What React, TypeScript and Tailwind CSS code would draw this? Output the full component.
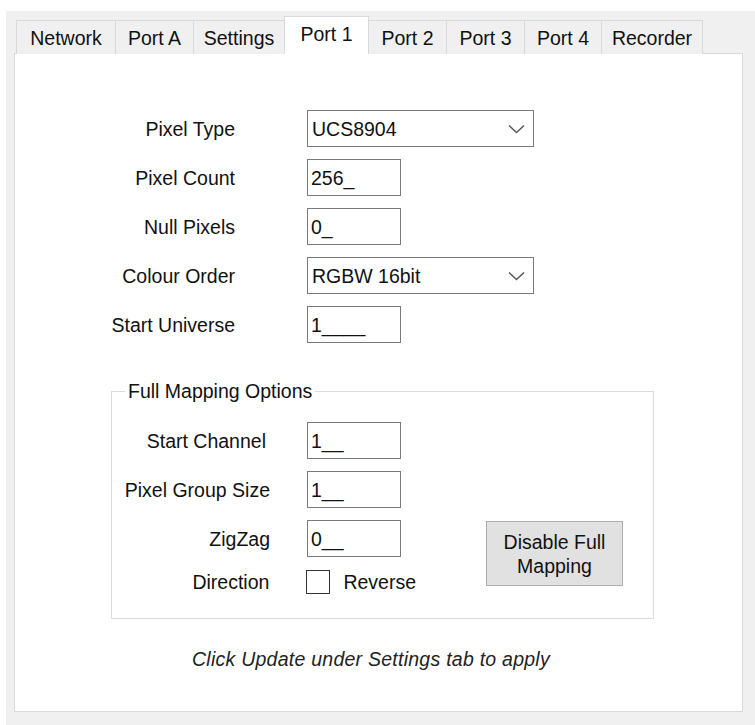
import React from "react";

const font = { fontFamily: '"Liberation Sans", Arial, sans-serif' };

function Chevron() {
  return (
    <svg width="17" height="10" viewBox="0 0 17 10" className="mr-[8px]">
      <path d="M1 1.5 L8.5 8.5 L16 1.5" fill="none" stroke="#5a5a5a" strokeWidth="1.6" />
    </svg>
  );
}

function Combo({ value }: { value: string }) {
  return (
    <div className="flex h-[37px] w-[227px] items-center justify-between border border-[#7a7a7a] bg-white pl-[4px]">
      <span>{value}</span>
      <Chevron />
    </div>
  );
}

function TextBox({ value }: { value: string }) {
  return (
    <div className="flex h-[37px] w-[94px] items-center border border-[#7a7a7a] bg-white pl-[3px]">
      <span>{value}</span>
    </div>
  );
}

const tabs: { name: string; w: string; sel?: boolean }[] = [
  { name: "Network", w: "w-[100px]" },
  { name: "Port A", w: "w-[79px]" },
  { name: "Settings", w: "w-[92px]" },
  { name: "Port 1", w: "w-[85px]", sel: true },
  { name: "Port 2", w: "w-[79px]" },
  { name: "Port 3", w: "w-[79px]" },
  { name: "Port 4", w: "w-[78px]" },
  { name: "Recorder", w: "w-[102px]" },
];

export default function App() {
  return (
    <div className="h-[725px] w-[755px] overflow-hidden bg-white pl-[6px] pt-[11px] text-[19.5px] leading-[22px] text-[#111]" style={font}>
      <div className="h-[714px] w-[749px] bg-[#f0f0f0] pl-[8px] pt-[5px]">
        <div className="relative z-10 mb-[-1px] ml-[2px] flex h-[38px] items-end">
          {tabs.map((t, i) =>
            t.sel ? (
              <div
                key={t.name}
                className={`${t.w} ${i > 0 ? "-ml-px" : ""} relative z-10 flex h-[38px] items-center justify-center border-x border-t border-[#d9d9d9] bg-white pb-[4px]`}
              >
                {t.name}
              </div>
            ) : (
              <div
                key={t.name}
                className={`${t.w} ${i > 0 ? "-ml-px" : ""} flex h-[34px] items-center justify-center border-x border-t border-[#d9d9d9] bg-[#f0f0f0]`}
              >
                {t.name}
              </div>
            )
          )}
        </div>
        <div className="h-[659px] w-[729px] border border-[#d9d9d9] bg-white pl-[96px] pt-[56px]">
          <div className="flex flex-col gap-[12px]">
            <div className="flex h-[37px] items-center gap-[72px]">
              <div className="w-[124px] text-right">Pixel Type</div>
              <Combo value="UCS8904" />
            </div>
            <div className="flex h-[37px] items-center gap-[72px]">
              <div className="w-[124px] text-right">Pixel Count</div>
              <TextBox value="256_" />
            </div>
            <div className="flex h-[37px] items-center gap-[72px]">
              <div className="w-[124px] text-right">Null Pixels</div>
              <TextBox value="0_" />
            </div>
            <div className="flex h-[37px] items-center gap-[72px]">
              <div className="w-[124px] text-right">Colour Order</div>
              <Combo value="RGBW 16bit" />
            </div>
            <div className="flex h-[37px] items-center gap-[72px]">
              <div className="w-[124px] text-right">Start Universe</div>
              <TextBox value="1____" />
            </div>
          </div>

          <fieldset className="mt-[37px] w-[543px] border border-[#dcdcdc] pb-[23px] pt-[20px]">
            <legend className="ml-[13px] px-[3px]">Full Mapping Options</legend>
            <div className="flex items-start">
              <div className="flex w-[304px] flex-col gap-[12px]">
                <div className="flex h-[37px] items-center gap-[37px]">
                  <div className="w-[158px] pr-[4px] text-right">Start Channel</div>
                  <TextBox value="1__" />
                </div>
                <div className="flex h-[37px] items-center gap-[37px]">
                  <div className="w-[158px] text-right">Pixel Group Size</div>
                  <TextBox value="1__" />
                </div>
                <div className="flex h-[37px] items-center gap-[37px]">
                  <div className="w-[158px] text-right">ZigZag</div>
                  <TextBox value="0__" />
                </div>
                <div className="flex h-[26px] items-center gap-[37px]">
                  <div className="w-[158px] text-right">Direction</div>
                  <div className="flex items-center gap-[13px]">
                    <div className="h-[24px] w-[24px] border border-[#333] bg-white" />
                    <span>Reverse</span>
                  </div>
                </div>
              </div>
              <div className="ml-[70px] mt-[99px] flex h-[65px] w-[137px] items-center justify-center border border-[#adadad] bg-[#e1e1e1] text-center leading-[24px]">
                Disable Full
                <br />
                Mapping
              </div>
            </div>
          </fieldset>

          <div className="ml-[81px] mt-[29px] italic tracking-[0.25px] text-[#222]">Click Update under Settings tab to apply</div>
        </div>
      </div>
    </div>
  );
}
